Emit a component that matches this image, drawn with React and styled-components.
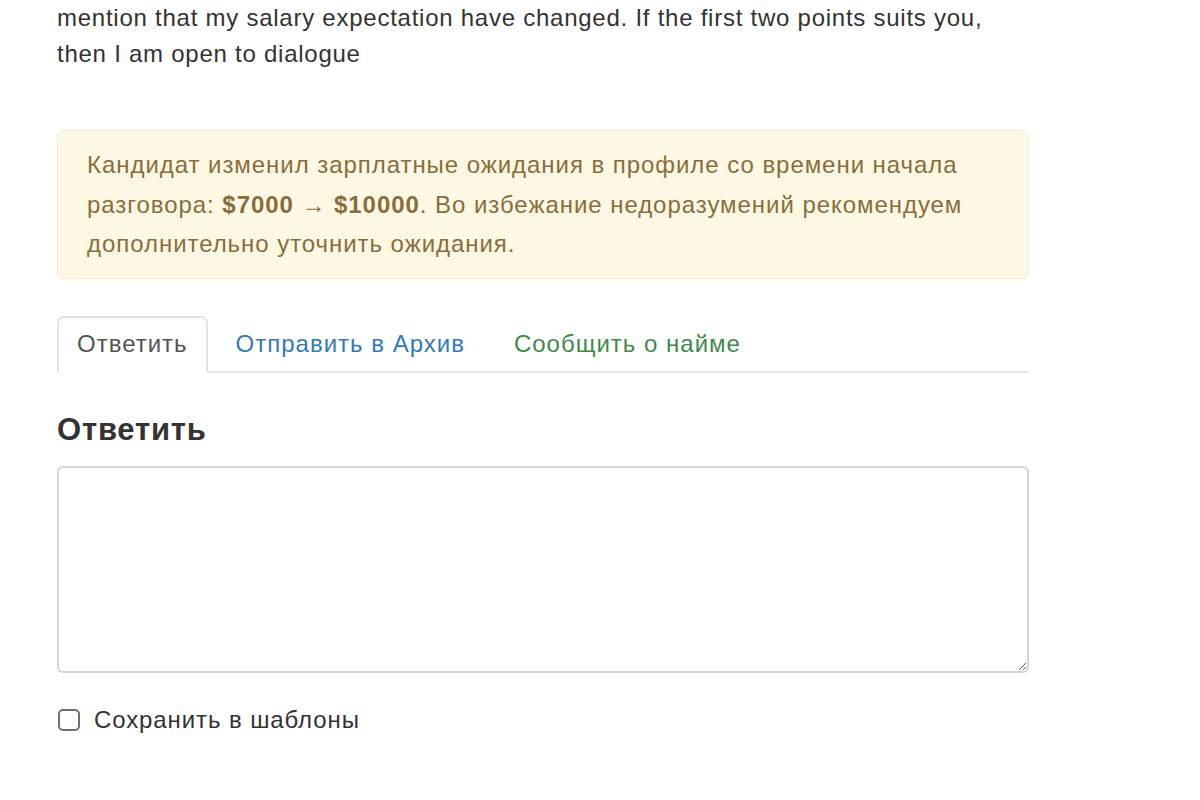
import styled, { createGlobalStyle } from 'styled-components'

const GlobalStyle = createGlobalStyle`
  html, body {
    margin: 0;
    padding: 0;
    background: #fff;
  }
  body {
    font-family: "Liberation Sans", Arial, sans-serif;
    color: #333;
  }
`

const Page = styled.div`
  width: 972px;
  padding: 0 0 0 57px;
`

const Message = styled.p`
  margin: 0 0 58px;
  font-size: 24px;
  letter-spacing: 0.75px;
  line-height: 36px;
  color: #333;
`

const Alert = styled.div`
  background: #fcf8e3;
  border: 1px solid #faebcc;
  border-radius: 7px;
  color: #8a6d3b;
  font-size: 24px;
  letter-spacing: 0.95px;
  line-height: 39.5px;
  padding: 14px 29px;
  margin-bottom: 37px;

  b {
    font-weight: bold;
  }
`

const Tabs = styled.ul`
  display: flex;
  list-style: none;
  margin: 0;
  padding: 0;
  border-bottom: 2px solid #e6e6e6;
`

const Tab = styled.li`
  box-sizing: border-box;
  margin-right: ${p => (p.$active ? '8px' : '9px')};
  margin-bottom: -2px;
  padding: 0 18px;
  height: 57px;
  display: flex;
  align-items: center;
  font-size: 24px;
  letter-spacing: 1px;
  color: ${p => p.$color || '#555'};
  border: 2px solid ${p => (p.$active ? '#e3e3e3' : 'transparent')};
  border-bottom-color: ${p => (p.$active ? '#fff' : 'transparent')};
  border-radius: 7px 7px 0 0;
  background: ${p => (p.$active ? '#fff' : 'transparent')};
`

const Heading = styled.h3`
  margin: 39px 0 18px;
  font-size: 31px;
  letter-spacing: 0.8px;
  line-height: 36px;
  font-weight: bold;
  color: #333;
`

const TextArea = styled.textarea`
  display: block;
  box-sizing: border-box;
  width: 100%;
  height: 207px;
  border: 2px solid #d4d4d4;
  border-radius: 6px;
  resize: vertical;
  outline: none;
  font-family: inherit;
  font-size: 22px;
`

const CheckRow = styled.label`
  display: flex;
  align-items: center;
  gap: 14px;
  margin-top: 33px;
  font-size: 24px;
  letter-spacing: 0.9px;
  line-height: 28px;
  color: #333;
`

const Box = styled.span`
  width: 18px;
  height: 18px;
  margin-left: 1px;
  border: 2px solid #6f6f6f;
  border-radius: 5px;
  background: #fff;
`

export default function App() {
  return (
    <Page>
      <GlobalStyle />
      <Message>
        mention that my salary expectation have changed. If the first two points suits you,
        <br />
        then I am open to dialogue
      </Message>
      <Alert>
        Кандидат изменил зарплатные ожидания в профиле со времени начала
        <br />
        разговора: <b>$7000 → $10000</b>. Во избежание недоразумений рекомендуем
        <br />
        дополнительно уточнить ожидания.
      </Alert>
      <Tabs>
        <Tab $active>Ответить</Tab>
        <Tab $color="#337ab7">Отправить в Архив</Tab>
        <Tab $color="#3f8a48">Сообщить о найме</Tab>
      </Tabs>
      <Heading>Ответить</Heading>
      <TextArea />
      <CheckRow>
        <Box />
        Сохранить в шаблоны
      </CheckRow>
    </Page>
  )
}
